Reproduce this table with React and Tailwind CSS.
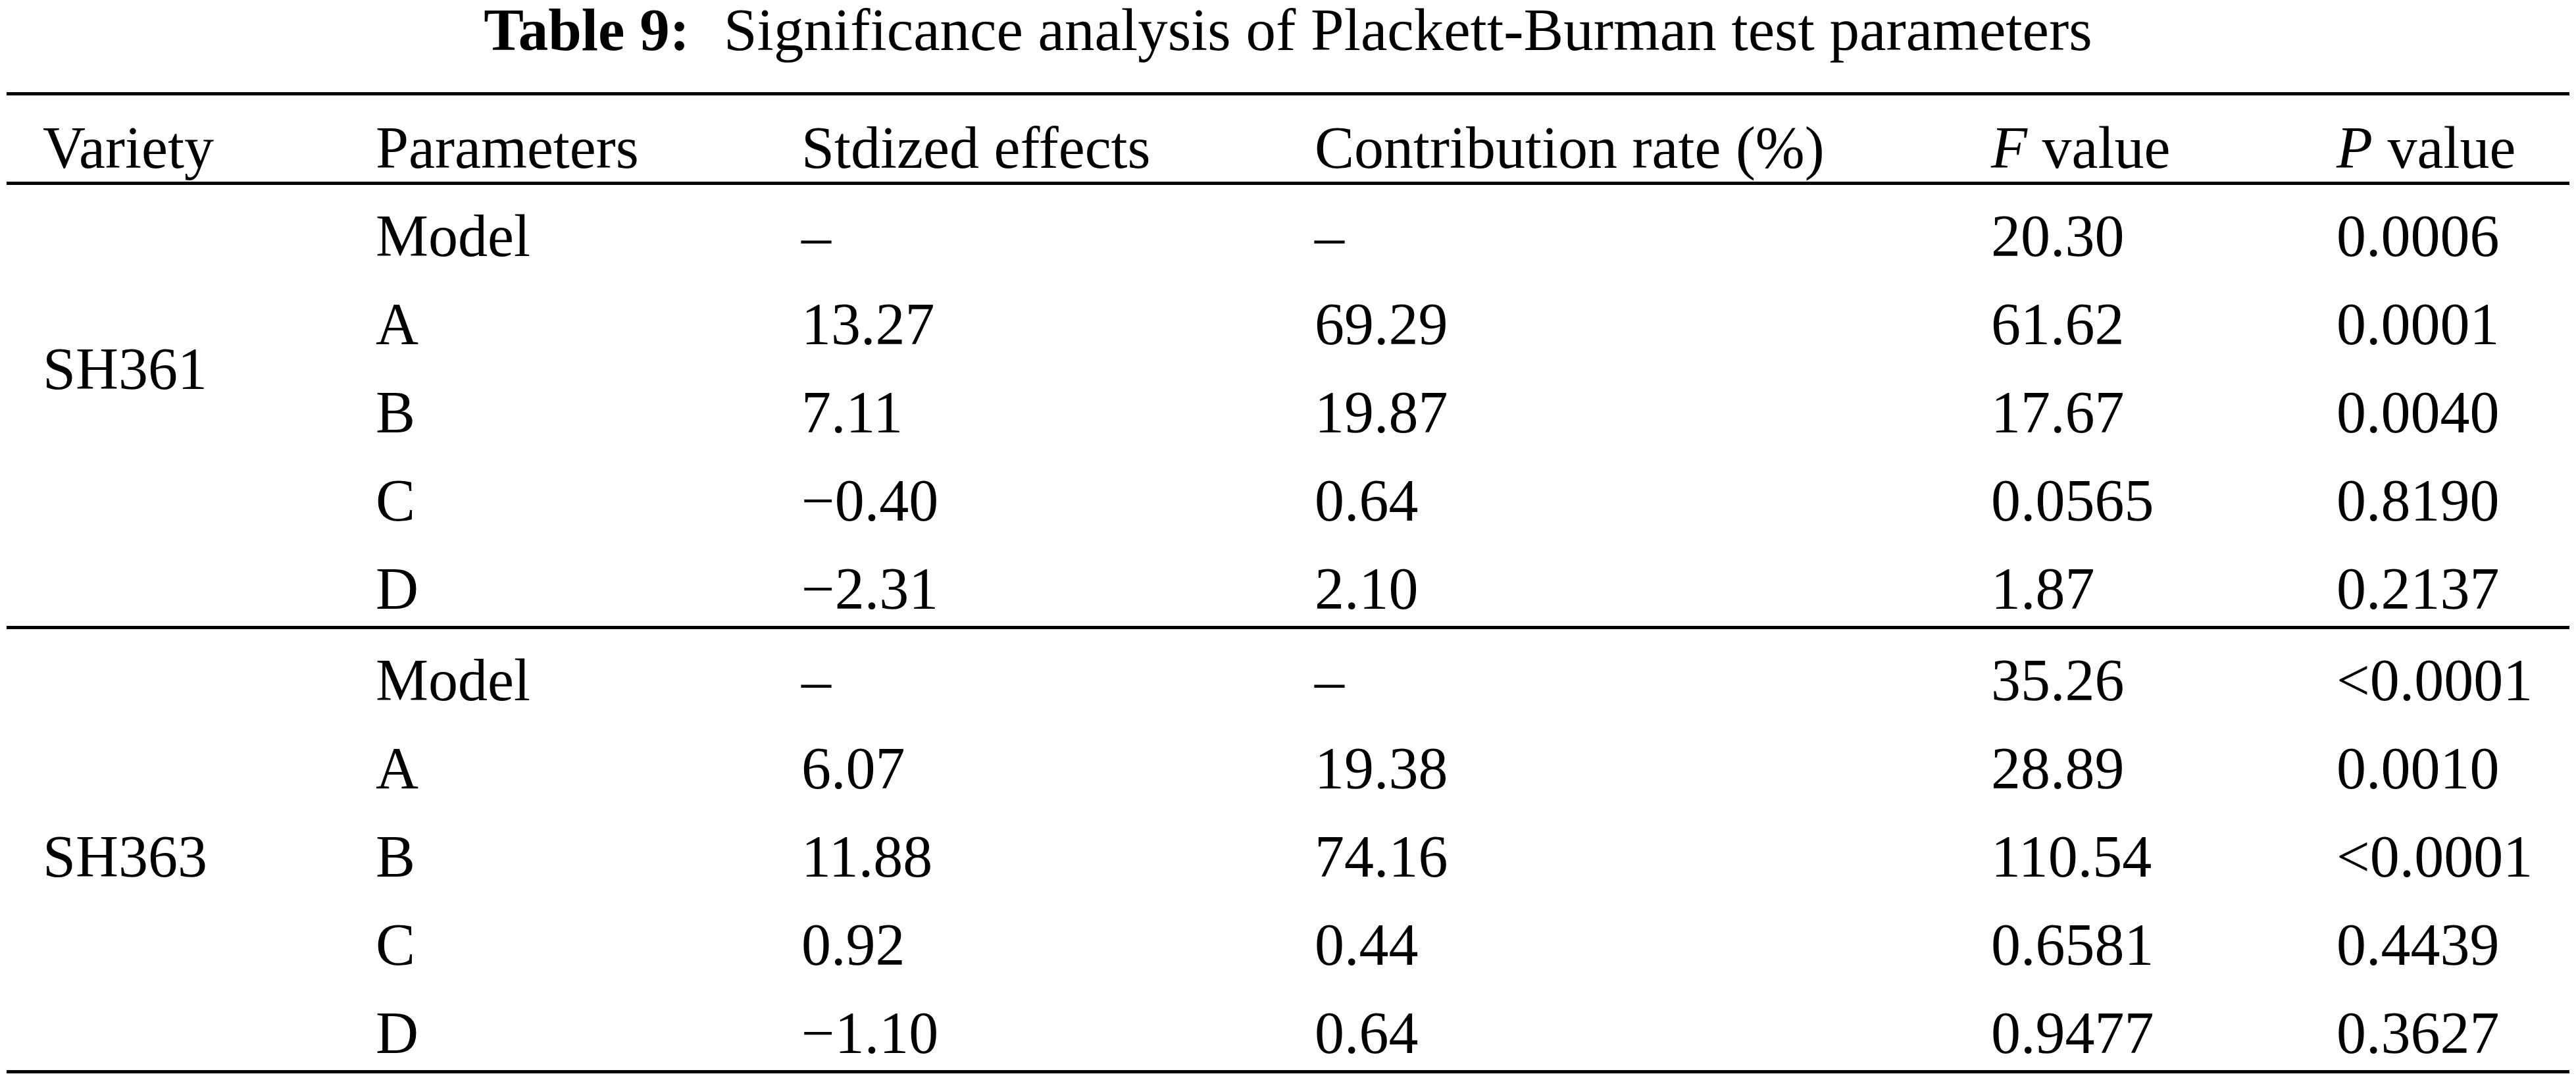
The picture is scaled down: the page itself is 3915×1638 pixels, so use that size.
const cols = "grid grid-cols-[647px_780px_1028px_525px_1fr]";

const groups = [
  {
    variety: "SH361",
    labelPad: "pt-[235px]",
    rows: [
      ["Model", "–", "–", "20.30", "0.0006"],
      ["A", "13.27", "69.29", "61.62", "0.0001"],
      ["B", "7.11", "19.87", "17.67", "0.0040"],
      ["C", "−0.40", "0.64", "0.0565", "0.8190"],
      ["D", "−2.31", "2.10", "1.87", "0.2137"],
    ],
  },
  {
    variety: "SH363",
    labelPad: "pt-[301px]",
    rows: [
      ["Model", "–", "–", "35.26", "<0.0001"],
      ["A", "6.07", "19.38", "28.89", "0.0010"],
      ["B", "11.88", "74.16", "110.54", "<0.0001"],
      ["C", "0.92", "0.44", "0.6581", "0.4439"],
      ["D", "−1.10", "0.64", "0.9477", "0.3627"],
    ],
  },
];

function Group({ group }) {
  return (
    <div className="flex border-b-[5px] border-black">
      <div className={`w-[561px] shrink-0 pl-[55px] ${group.labelPad}`}>{group.variety}</div>
      <div className="flex-1">
        {group.rows.map((row, i) => (
          <div key={i} className={`${cols} h-[134px] pt-[33px]`}>
            {row.map((cell, j) => (
              <div key={j} className="whitespace-nowrap">
                {cell}
              </div>
            ))}
          </div>
        ))}
      </div>
    </div>
  );
}

export default function App() {
  return (
    <div className="bg-white w-[3915px] h-[1638px] text-black font-['Liberation_Serif','Times_New_Roman',serif] text-[90px] leading-[90px]">
      <div className="h-[140px] pt-[1px] text-center whitespace-nowrap text-[91px]">
        <span className="font-bold">Table 9:</span>
        <span className="ml-[52px]">Significance analysis of Plackett-Burman test parameters</span>
      </div>

      <div className="mx-[10px]">
        <div className="flex h-[141px] pt-[35px] border-t-[5px] border-b-[5px] border-black">
          <div className="w-[561px] shrink-0 pl-[55px]">Variety</div>
          <div className={`${cols} flex-1`}>
            <div>Parameters</div>
            <div>Stdized effects</div>
            <div>Contribution rate (%)</div>
            <div>
              <i>F</i> value
            </div>
            <div>
              <i>P</i> value
            </div>
          </div>
        </div>

        {groups.map((g) => (
          <Group key={g.variety} group={g} />
        ))}
      </div>
    </div>
  );
}
